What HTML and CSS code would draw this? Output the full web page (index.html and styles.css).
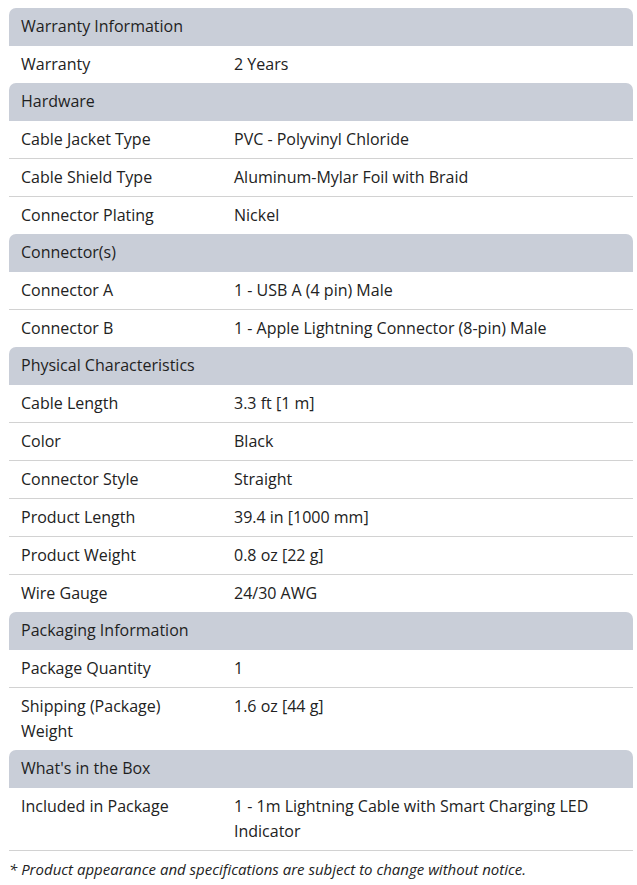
FILE: index.html
```html
<!DOCTYPE html>
<html>
<head>
<meta charset="utf-8">
<link rel="stylesheet" href="styles.css">
</head>
<body>
<div class="specs">
  <div class="group">
    <div class="head">Warranty Information</div>
    <div class="row"><div class="k">Warranty</div><div class="v">2 Years</div></div>
  </div>
  <div class="group">
    <div class="head">Hardware</div>
    <div class="row"><div class="k">Cable Jacket Type</div><div class="v">PVC - Polyvinyl Chloride</div></div>
    <div class="row"><div class="k">Cable Shield Type</div><div class="v">Aluminum-Mylar Foil with Braid</div></div>
    <div class="row"><div class="k">Connector Plating</div><div class="v">Nickel</div></div>
  </div>
  <div class="group">
    <div class="head">Connector(s)</div>
    <div class="row"><div class="k">Connector A</div><div class="v">1 - USB A (4 pin) Male</div></div>
    <div class="row"><div class="k">Connector B</div><div class="v">1 - Apple Lightning Connector (8-pin) Male</div></div>
  </div>
  <div class="group">
    <div class="head">Physical Characteristics</div>
    <div class="row"><div class="k">Cable Length</div><div class="v">3.3 ft [1 m]</div></div>
    <div class="row"><div class="k">Color</div><div class="v">Black</div></div>
    <div class="row"><div class="k">Connector Style</div><div class="v">Straight</div></div>
    <div class="row"><div class="k">Product Length</div><div class="v">39.4 in [1000 mm]</div></div>
    <div class="row"><div class="k">Product Weight</div><div class="v">0.8 oz [22 g]</div></div>
    <div class="row"><div class="k">Wire Gauge</div><div class="v">24/30 AWG</div></div>
  </div>
  <div class="group">
    <div class="head">Packaging Information</div>
    <div class="row"><div class="k">Package Quantity</div><div class="v">1</div></div>
    <div class="row"><div class="k">Shipping (Package) Weight</div><div class="v">1.6 oz [44 g]</div></div>
  </div>
  <div class="group last">
    <div class="head">What's in the Box</div>
    <div class="row"><div class="k">Included in Package</div><div class="v">1 - 1m Lightning Cable with Smart Charging LED Indicator</div></div>
  </div>
</div>
<p class="note">* Product appearance and specifications are subject to change without notice.</p>
</body>
</html>
```

FILE: styles.css
```css
html, body {
  margin: 0;
  padding: 0;
  background: #ffffff;
}
body {
  padding: 8px 4px 0 9px;
  font-family: "Open Sans", "Liberation Sans", sans-serif;
  font-size: 16px;
  line-height: 25px;
  color: #222222;
}
.specs {
  width: 624px;
}
.head {
  background: #c9ced8;
  border-radius: 7px 7px 0 0;
  padding: 5.5px 12px 7.5px;
  color: #1f1f1f;
}
.row {
  display: grid;
  grid-template-columns: 213px 1fr;
  border-bottom: 1px solid #d2d2d2;
}
.group .row:last-child {
  border-bottom: none;
}
.group.last .row:last-child {
  border-bottom: 1px solid #d2d2d2;
}
.k, .v {
  padding: 6px 12px;
}
.note {
  margin: 6px 0 0 0;
  font-style: italic;
  font-size: 15px;
  color: #222222;
}
```
